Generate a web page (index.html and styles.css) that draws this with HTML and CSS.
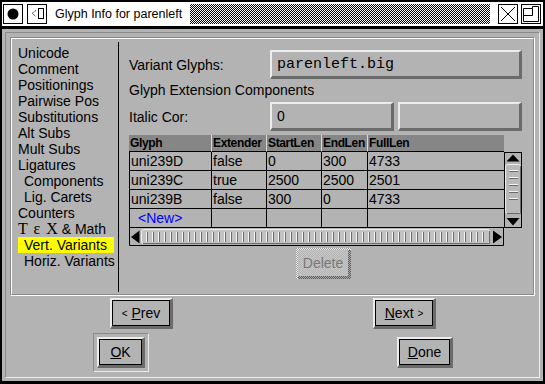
FILE: index.html
```html
<!DOCTYPE html>
<html>
<head>
<meta charset="utf-8">
<title>Glyph Info for parenleft</title>
<link rel="stylesheet" href="styles.css">
</head>
<body>
<div class="window">
  <div class="titlebar">
    <svg class="tbtn" width="20" height="20" viewBox="0 0 20 20"><rect x="0.5" y="0.5" width="19" height="19" fill="#fff" stroke="#000"/><circle cx="10" cy="10" r="5.5" fill="#000"/></svg>
    <svg class="tbtn gap4" width="20" height="20" viewBox="0 0 20 20"><rect x="0.5" y="0.5" width="19" height="19" fill="#fff" stroke="#000"/><path d="M9 6.5 L5 9.5 L9 12.5" fill="none" stroke="#000" stroke-dasharray="1 1"/><rect x="11.5" y="4.5" width="5" height="10" fill="none" stroke="#000"/></svg>
    <span class="title">Glyph Info for parenleft</span>
    <span class="stipple"></span>
    <svg class="tbtn xbtn" width="20" height="20" viewBox="0 0 20 20"><rect x="0.5" y="0.5" width="19" height="19" fill="#fff" stroke="#000"/><path d="M3 3 L17 17 M17 3 L3 17" stroke="#000" stroke-width="1"/></svg>
    <svg class="tbtn maxbtn" width="20" height="20" viewBox="0 0 20 20"><rect x="0.5" y="0.5" width="19" height="19" fill="#fff" stroke="#000"/><path d="M2.5 4.5 H11.5 V2.5 H17.5 V17.5 H2.5 Z M2.5 11.5 H11.5 V4.5" fill="none" stroke="#000"/></svg>
  </div>
  <div class="client">
    <div class="panel">
      <div class="frame">
        <div class="frame-in">
          <ul class="list">
            <li>Unicode</li>
            <li>Comment</li>
            <li>Positionings</li>
            <li>Pairwise Pos</li>
            <li>Substitutions</li>
            <li>Alt Subs</li>
            <li>Mult Subs</li>
            <li>Ligatures</li>
            <li class="ind">Components</li>
            <li class="ind">Lig. Carets</li>
            <li>Counters</li>
            <li><span class="tex">Τ ε Χ</span> &amp; Math</li>
            <li class="ind sel">Vert. Variants</li>
            <li class="ind">Horiz. Variants</li>
          </ul>
          <div class="divider"></div>
          <div class="pane">
            <div class="frow">
              <span class="label">Variant Glyphs:</span>
              <div class="field wide mono">parenleft.big</div>
            </div>
            <div class="row2">Glyph Extension Components</div>
            <div class="frow">
              <span class="label">Italic Cor:</span>
              <div class="field half">0</div>
              <div class="field half second"></div>
            </div>
            <div class="table">
              <div class="th">Glyph</div>
              <div class="th">Extender</div>
              <div class="th">StartLen</div>
              <div class="th">EndLen</div>
              <div class="th last">FullLen</div>
              <div class="thx"></div>

              <div class="td first">uni239D</div>
              <div class="td">false</div>
              <div class="td">0</div>
              <div class="td">300</div>
              <div class="td last">4733</div>

              <svg class="vs" width="18" height="76" viewBox="0 0 18 76">
                <rect x="0.5" y="0.5" width="17" height="75" fill="#b3b3b3" stroke="#000"/>
                <path d="M9 2.5 L15.5 9.5 L2.5 9.5 Z" fill="#000"/>
                <rect x="1.5" y="12.5" width="15" height="49" rx="2" fill="#b9b9b9" stroke="#efefef"/>
                <path d="M16.5 14 V61.5 H3" fill="none" stroke="#6b6b6b"/>
                <path d="M5 18.5 H14 M5 25.5 H14 M5 32.5 H14 M5 39.5 H14 M5 46.5 H14" stroke="#f4f4f4"/>
                <path d="M5 19.5 H14 M5 26.5 H14 M5 33.5 H14 M5 40.5 H14 M5 47.5 H14" stroke="#6b6b6b"/>
                <path d="M9 73.5 L15.5 66 L2.5 66 Z" fill="#000"/>
              </svg>

              <div class="td first">uni239C</div>
              <div class="td">true</div>
              <div class="td">2500</div>
              <div class="td">2500</div>
              <div class="td last">2501</div>

              <div class="td first">uni239B</div>
              <div class="td">false</div>
              <div class="td">300</div>
              <div class="td">0</div>
              <div class="td last">4733</div>

              <div class="td first new">&lt;New&gt;</div>
              <div class="td"></div>
              <div class="td"></div>
              <div class="td"></div>
              <div class="td last"></div>

              <svg class="hs" width="375" height="18" viewBox="0 0 375 18">
                <defs>
                  <pattern id="ticks" patternUnits="userSpaceOnUse" x="17" y="0" width="6" height="18">
                    <rect x="0" y="0" width="1" height="18" fill="#f4f4f4"/>
                    <rect x="1" y="0" width="1" height="18" fill="#6b6b6b"/>
                  </pattern>
                </defs>
                <rect x="0" y="0" width="375" height="18" fill="#b3b3b3"/>
                <path d="M0.5 0 V17.5 H374.5 V0" fill="none" stroke="#000"/>
                <path d="M2 9 L10.5 2.5 L10.5 15.5 Z" fill="#000"/>
                <rect x="12.5" y="1.5" width="348" height="14" rx="2" fill="#c2c2c2" stroke="#efefef"/>
                <path d="M360.5 3 V15.5 H14" fill="none" stroke="#6b6b6b"/>
                <rect x="17" y="4" width="338" height="10" fill="url(#ticks)"/>
                <path d="M373 9 L364 2.5 L364 15.5 Z" fill="#000"/>
              </svg>
            </div>
            <div class="delrow">
              <div class="dis-outer"><div class="dis-mid"><div class="dis-face">Delete</div></div></div>
            </div>
          </div>
        </div>
      </div>
      <div class="brow1">
        <div class="btn wide"><div class="f"><span class="arr">&lt;</span>&nbsp;<u>P</u>rev</div></div>
        <div class="btn wide next"><div class="f"><u>N</u>ext&nbsp;<span class="arr">&gt;</span></div></div>
      </div>
      <div class="brow2">
        <div class="defframe"><div class="btn ok"><div class="f"><u>O</u>K</div></div></div>
        <div class="btn done"><div class="f"><u>D</u>one</div></div>
      </div>
    </div>
  </div>
</div>
</body>
</html>
```

FILE: styles.css
```css
* { box-sizing: border-box; }
html, body { margin: 0; padding: 0; }
body {
  width: 545px;
  height: 384px;
  overflow: hidden;
  background: #b3b3b3;
  font-family: "Liberation Sans", Arial, sans-serif;
  font-size: 14px;
  color: #000;
}
.window {
  width: 545px;
  height: 384px;
  border: 2px solid #000;
  border-bottom-width: 3px;
  display: flex;
  flex-direction: column;
}
.titlebar {
  flex: none;
  height: 27px;
  background: #fff;
  border-bottom: 3px solid #000;
  display: flex;
  align-items: center;
  padding-left: 1px;
}
.tbtn { display: block; flex: none; }
.gap4 { margin-left: 4px; }
.title {
  margin-left: 8px;
  width: 135px;
  font-size: 12.5px;
  white-space: nowrap;
}
.stipple {
  width: 300px;
  height: 20px;
  background: repeating-conic-gradient(#000 0% 25%, #fff 0% 50%) 0 0 / 2px 2px;
}
.xbtn { margin-left: 8px; }
.maxbtn { margin-left: 3px; }

.client {
  flex: 1;
  padding: 3px;
  display: flex;
  background: #b3b3b3;
}
.panel {
  flex: 1;
  border: 1px solid;
  border-color: #8a8a8a #ececec #ececec #8a8a8a;
  display: flex;
  flex-direction: column;
}
.frame {
  margin: 4px 4px 0;
  height: 259px;
  border: 1px solid;
  border-color: #8a8a8a #fff #fff #8a8a8a;
}
.frame-in {
  height: 100%;
  border: 1px solid;
  border-color: #fff #8a8a8a #8a8a8a #fff;
  display: flex;
}
.list {
  width: 106px;
  flex: none;
  margin: 0;
  padding: 6px 0 0 6px;
  list-style: none;
}
.list li {
  width: 96px;
  height: 16px;
  line-height: 16px;
  white-space: nowrap;
}
.list li.ind { padding-left: 6px; }
.list li.sel { background: #ffff00; }
.tex {
  font-family: "Liberation Serif", "DejaVu Serif", serif;
  font-size: 16px;
  word-spacing: 2px;
}
.divider {
  width: 1px;
  flex: none;
  background: #000;
  margin: 3px 0 2px;
}
.pane {
  width: 414px;
  flex: none;
  padding: 11px 11px 0 10px;
}
.frow {
  display: flex;
  align-items: center;
  height: 29px;
}
.label { width: 141px; flex: none; }
.field {
  height: 29px;
  border-style: solid;
  border-width: 2px 3px 3px 2px;
  border-color: #ececec #6b6b6b #6b6b6b #ececec;
  display: flex;
  align-items: center;
  padding-left: 5px;
  white-space: nowrap;
}
.field.wide { width: 252px; }
.field.half { width: 124px; }
.field.second { margin-left: 4px; }
.mono {
  font-family: "Liberation Mono", "Courier New", monospace;
  font-size: 15px;
}
.row2 {
  height: 23px;
  line-height: 23px;
}
.table {
  margin-top: 4px;
  display: grid;
  grid-template-columns: 83px 55px 55px 46px 136px 18px;
  grid-template-rows: 17px 19px 19px 19px 19px 18px;
}
.th {
  background: #868686;
  font-weight: bold;
  font-size: 12px;
  letter-spacing: -0.35px;
  line-height: 16px;
  padding-left: 1px;
  border-bottom: 1px solid #000;
  border-right: 1px solid #d8d8d8;
  white-space: nowrap;
}
.th.last { border-right: none; }
.td {
  line-height: 18px;
  padding-left: 1px;
  border-bottom: 1px solid #000;
  border-right: 1px solid #000;
  white-space: nowrap;
  overflow: hidden;
}
.td.first { border-left: 1px solid #000; }
.td.last { border-right: none; }
.td.new { color: #0000ff; padding-left: 8px; }
.vs { grid-column: 6; grid-row: 2 / 6; display: block; }
.hs { grid-column: 1 / 6; grid-row: 6; display: block; }

.delrow {
  margin-top: 2px;
  padding-left: 167px;
}
.dis-outer {
  width: 55px;
  height: 31px;
  padding: 2px 0 0 2px;
  background: repeating-conic-gradient(#f2f2f2 0% 25%, #9a9a9a 0% 50%) 0 0 / 2px 2px;
}
.dis-mid {
  height: 100%;
  padding: 0 3px 3px 0;
  background: repeating-conic-gradient(#5e5e5e 0% 25%, #a8a8a8 0% 50%) 0 0 / 2px 2px;
}
.dis-face {
  height: 100%;
  background: repeating-conic-gradient(#c6c6c6 0% 25%, #b6b6b6 0% 50%) 0 0 / 2px 2px;
  color: #787878;
  display: flex;
  align-items: center;
  justify-content: center;
}

.brow1 {
  display: flex;
  margin-top: 2px;
  padding-left: 104px;
}
.brow2 {
  display: flex;
  align-items: center;
  margin-top: 4px;
  padding-left: 87px;
}
.btn {
  height: 31px;
  border-style: solid;
  border-width: 2px 3px 3px 2px;
  border-color: #ececec #6b6b6b #6b6b6b #ececec;
}
.btn .f {
  height: 100%;
  border: 1px solid #000;
  display: flex;
  align-items: center;
  justify-content: center;
  white-space: nowrap;
}
.btn.wide { width: 63px; }
.btn.next { margin-left: 200px; }
.btn.ok { width: 48px; }
.btn.done { width: 56px; margin-left: 248px; }
.arr { font-size: 10px; }
.defframe {
  width: 56px;
  height: 39px;
  padding: 3px;
  border: 1px solid;
  border-color: #8a8a8a #ececec #ececec #8a8a8a;
}
```
